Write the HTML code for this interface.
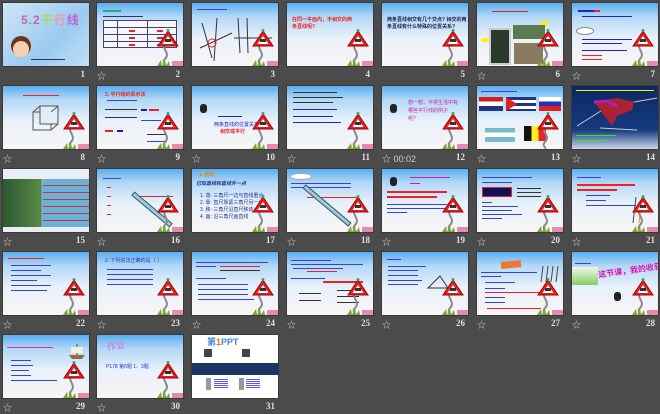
<!DOCTYPE html>
<html><head><meta charset="utf-8">
<style>
*{margin:0;padding:0;box-sizing:border-box}
body{width:660px;height:410px;background:#4b4b4b;position:relative;overflow:hidden;font-family:"Liberation Sans","Noto Sans CJK SC",sans-serif}
.s{position:absolute;width:86px;height:63px;overflow:hidden;background:linear-gradient(#5aaef0 0%,#b4d8f6 22%,#e8f1fa 55%,#f8f5f5 100%);box-shadow:0 0 0 1px #3a3a3a}
.s.w{background:#fff}
.n{position:absolute;color:#e0e0e0;font-size:9px;font-family:"Liberation Serif",serif;font-weight:bold;text-align:right;width:30px}
.st{position:absolute;color:#cfcfcf;font-size:9px}
.sg{position:absolute;left:60px;top:26px;width:22px;height:37px}
.gr{position:absolute;right:0;bottom:0;width:26px;height:8px}
.t{position:absolute;font-size:5px;line-height:6px;white-space:nowrap}
.b{position:absolute;height:2px;background:#3344dd}
</style></head><body>

<svg width="0" height="0" style="position:absolute">
<defs>
<g id="sign">
<path d="M8 14 C4 20 14 24 8 30 C4 34 10 36 8 37" stroke="#8a8a8a" stroke-width="2" fill="none"/>
<path d="M11 2 L21 17 L1 17 Z" fill="#d22" stroke="#a00" stroke-width="1"/>
<path d="M11 7 L16.5 15 L5.5 15 Z" fill="#fff"/>
<rect x="8" y="10" width="6" height="3" fill="#333"/>
<circle cx="11" cy="1.5" r="1.5" fill="#3a6"/>
</g>
<g id="grass">
<path d="M0 8 L4 2 L5 8 L8 1 L9 8 L12 3 L13 8 Z" fill="#7a3"/>
<rect x="15" y="3" width="11" height="5" fill="#e88ab0"/>
</g>
</defs>
</svg>

<!-- Row 1 -->
<div class="s" style="left:3px;top:3px;background:linear-gradient(135deg,#cfe6f8,#9ccaf0 60%,#bfe0f8)">
<div class="t" style="left:18px;top:10px;font-size:12px;line-height:14px;color:#c6a;font-weight:bold;letter-spacing:1px">5.2<span style="color:#a8d86a">平</span><span style="color:#e9a">行</span><span style="color:#b6c">线</span></div>
<div style="position:absolute;left:10px;top:38px;width:16px;height:16px;border-radius:50%;background:#f5d0b0;box-shadow:0 -3px 0 2px #6b3520"></div>
<div class="b" style="left:28px;top:56px;width:34px;height:1px;background:#335"></div>
</div>
<div class="s" style="left:97px;top:3px">
<div class="b" style="left:6px;top:7px;width:18px;background:#2a8"></div>
<div class="b" style="left:6px;top:13px;width:40px;background:#336;height:1px"></div>
<div style="position:absolute;left:6px;top:17px;width:74px;height:28px;border:1px solid #446;background:#f5f5ff"></div>
<div class="b" style="left:6px;top:24px;width:74px;height:1px;background:#446"></div>
<div class="b" style="left:6px;top:31px;width:74px;height:1px;background:#446"></div>
<div class="b" style="left:6px;top:38px;width:74px;height:1px;background:#446"></div>
<div class="b" style="left:20px;top:17px;width:1px;height:28px;background:#446"></div>
<div class="b" style="left:50px;top:17px;width:1px;height:28px;background:#446"></div>
<div class="b" style="left:32px;top:27px;width:6px;background:#e22"></div>
<div class="b" style="left:32px;top:34px;width:6px;background:#e22"></div>
<div class="b" style="left:32px;top:41px;width:6px;background:#e22"></div>
<div class="b" style="left:60px;top:27px;width:6px;background:#e22"></div>
<div class="b" style="left:60px;top:34px;width:6px;background:#e22"></div>
<div class="b" style="left:60px;top:41px;width:6px;background:#e22"></div>
<svg class="sg" viewBox="0 0 22 37"><use href="#sign"/></svg><svg class="gr" viewBox="0 0 26 8"><use href="#grass"/></svg>
</div>
<div class="s" style="left:192px;top:3px">
<div class="b" style="left:5px;top:6px;width:30px;height:1px"></div>
<svg style="position:absolute;left:0;top:0" width="86" height="63"><g stroke="#333" stroke-width="1"><line x1="8" y1="45" x2="40" y2="30"/><line x1="10" y1="20" x2="20" y2="55"/><line x1="25" y1="15" x2="22" y2="58"/><line x1="46" y1="15" x2="48" y2="50"/><line x1="55" y1="15" x2="56" y2="50"/><line x1="42" y1="35" x2="80" y2="35"/></g><circle cx="20" cy="40" r="4" fill="none" stroke="#e22"/></svg>
<svg class="sg" viewBox="0 0 22 37"><use href="#sign"/></svg><svg class="gr" viewBox="0 0 26 8"><use href="#grass"/></svg>
</div>
<div class="s" style="left:287px;top:3px">
<div class="t" style="left:5px;top:14px;color:#e22;font-weight:bold">在同一平面内，不相交的两</div>
<div class="t" style="left:5px;top:21px;color:#e22;font-weight:bold">条直线呢?</div>
<svg class="sg" viewBox="0 0 22 37"><use href="#sign"/></svg><svg class="gr" viewBox="0 0 26 8"><use href="#grass"/></svg>
</div>
<div class="s" style="left:382px;top:3px">
<div class="t" style="left:5px;top:14px;color:#225;font-weight:bold">两条直线相交有几个交点? 相交的两</div>
<div class="t" style="left:5px;top:21px;color:#225;font-weight:bold">条直线有什么特殊的位置关系?</div>
<svg class="sg" viewBox="0 0 22 37"><use href="#sign"/></svg><svg class="gr" viewBox="0 0 26 8"><use href="#grass"/></svg>
</div>
<div class="s" style="left:477px;top:3px">
<div class="b" style="left:15px;top:8px;width:36px;background:#e22;height:1px"></div>
<div style="position:absolute;left:12px;top:25px;width:22px;height:37px;background:#2a3a2a;border:2px solid #ccc"></div>
<div style="position:absolute;left:36px;top:22px;width:32px;height:14px;background:#5c7a50"></div>
<div style="position:absolute;left:37px;top:40px;width:29px;height:21px;background:#8a7a60"></div>
<div style="position:absolute;left:4px;top:35px;width:8px;height:4px;background:#fe2"></div>
<div style="position:absolute;left:64px;top:18px;width:8px;height:4px;background:#fe2"></div>
<svg class="sg" viewBox="0 0 22 37"><use href="#sign"/></svg><svg class="gr" viewBox="0 0 26 8"><use href="#grass"/></svg>
</div>
<div class="s" style="left:572px;top:3px">
<div class="b" style="left:6px;top:7px;width:20px;background:#22c"></div>
<div class="b" style="left:22px;top:7px;width:6px;background:#e22"></div>
<div class="b" style="left:10px;top:13px;width:50px;height:1px;background:#22c"></div>
<div style="position:absolute;left:4px;top:24px;width:18px;height:8px;border-radius:50%;background:#fff;border:1px solid #888"></div>
<div class="b" style="left:10px;top:36px;width:50px;height:1px;background:#22c"></div>
<div class="b" style="left:10px;top:40px;width:40px;height:1px;background:#22c"></div>
<div class="b" style="left:10px;top:47px;width:45px;height:1px;background:#22c"></div>
<div class="b" style="left:10px;top:52px;width:20px;height:1px;background:#e22"></div>
<div class="b" style="left:10px;top:56px;width:20px;height:1px;background:#e22"></div>
<svg class="sg" viewBox="0 0 22 37"><use href="#sign"/></svg><svg class="gr" viewBox="0 0 26 8"><use href="#grass"/></svg>
</div>

<!-- Row 2 -->
<div class="s" style="left:3px;top:86px">
<div class="b" style="left:20px;top:9px;width:36px;height:1px;background:#e22"></div>
<svg style="position:absolute;left:28px;top:18px" width="30" height="30"><g fill="none" stroke="#555"><rect x="2" y="8" width="18" height="18"/><rect x="9" y="2" width="18" height="18" fill="#e0eef8"/><line x1="2" y1="8" x2="9" y2="2"/><line x1="20" y1="8" x2="27" y2="2"/><line x1="20" y1="26" x2="27" y2="20"/></g></svg>
<svg class="sg" viewBox="0 0 22 37"><use href="#sign"/></svg><svg class="gr" viewBox="0 0 26 8"><use href="#grass"/></svg>
</div>
<div class="s" style="left:97px;top:86px">
<div class="t" style="left:8px;top:6px;color:#e22;font-weight:bold">2. 平行线的表示法</div>
<div class="b" style="left:10px;top:14px;width:30px;height:1px"></div>
<div class="b" style="left:8px;top:23px;width:32px;height:1px;background:#333"></div>
<div class="b" style="left:8px;top:31px;width:32px;height:1px;background:#333"></div>
<div class="b" style="left:44px;top:23px;width:6px;background:#228"></div>
<div class="b" style="left:52px;top:23px;width:10px;background:#e22"></div>
<div class="b" style="left:8px;top:44px;width:8px;background:#e22"></div>
<div class="b" style="left:20px;top:44px;width:6px;background:#228"></div>
<div class="b" style="left:44px;top:34px;width:20px;height:1px"></div>
<div class="b" style="left:50px;top:48px;width:20px;height:1px;background:#333"></div>
<div class="b" style="left:50px;top:55px;width:20px;height:1px"></div>
<svg class="sg" viewBox="0 0 22 37"><use href="#sign"/></svg><svg class="gr" viewBox="0 0 26 8"><use href="#grass"/></svg>
</div>
<div class="s" style="left:192px;top:86px">
<div style="position:absolute;left:8px;top:18px;width:7px;height:9px;background:#222;border-radius:3px"></div>
<div class="b" style="left:26px;top:30px;width:24px;height:1px;background:#22c"></div>
<div class="t" style="left:22px;top:36px;color:#22c">两条直线的位置关系有</div>
<div class="t" style="left:28px;top:43px;color:#e22;font-weight:bold">相交或平行</div>
<svg class="sg" viewBox="0 0 22 37"><use href="#sign"/></svg><svg class="gr" viewBox="0 0 26 8"><use href="#grass"/></svg>
</div>
<div class="s" style="left:287px;top:86px">
<div class="b" style="left:6px;top:6px;width:44px;height:1px;background:#333"></div>
<div class="b" style="left:6px;top:11px;width:50px;height:1px;background:#333"></div>
<div class="b" style="left:6px;top:16px;width:40px;height:1px;background:#333"></div>
<div class="b" style="left:6px;top:23px;width:44px;height:1px;background:#22c"></div>
<div class="b" style="left:6px;top:30px;width:40px;height:1px;background:#22c"></div>
<div class="b" style="left:6px;top:36px;width:48px;height:1px;background:#22c"></div>
<svg class="sg" viewBox="0 0 22 37"><use href="#sign"/></svg><svg class="gr" viewBox="0 0 26 8"><use href="#grass"/></svg>
</div>
<div class="s" style="left:382px;top:86px">
<div style="position:absolute;left:8px;top:18px;width:7px;height:9px;background:#222;border-radius:3px"></div>
<div class="t" style="left:26px;top:14px;color:#c2a">想一想，平常生活中有</div>
<div class="t" style="left:26px;top:22px;color:#c2a">哪些平行线的例子</div>
<div class="t" style="left:26px;top:30px;color:#c2a">呢?</div>
<svg class="sg" viewBox="0 0 22 37"><use href="#sign"/></svg><svg class="gr" viewBox="0 0 26 8"><use href="#grass"/></svg>
</div>
<div class="s" style="left:477px;top:86px">
<div class="b" style="left:4px;top:5px;width:36px;height:1px"></div>
<div style="position:absolute;left:2px;top:11px;width:24px;height:14px;background:linear-gradient(#c22 33%,#fff 33% 66%,#238 66%)"></div>
<div style="position:absolute;left:29px;top:11px;width:30px;height:14px;background:repeating-linear-gradient(#238 0 3px,#fff 3px 6px)"></div>
<div style="position:absolute;left:29px;top:11px;width:0;height:0;border-top:7px solid transparent;border-bottom:7px solid transparent;border-left:11px solid #d22"></div>
<div style="position:absolute;left:62px;top:11px;width:22px;height:14px;background:linear-gradient(#fff 33%,#23b 33% 66%,#d22 66%)"></div>
<div style="position:absolute;left:8px;top:42px;width:30px;height:14px;background:linear-gradient(#7bc 33%,#fff 33% 66%,#7bc 66%)"></div>
<div style="position:absolute;left:47px;top:40px;width:22px;height:15px;background:linear-gradient(90deg,#111 33%,#fe2 33% 66%,#e22 66%)"></div>
<svg class="sg" viewBox="0 0 22 37"><use href="#sign"/></svg>
</div>
<div class="s" style="left:572px;top:86px;background:linear-gradient(#0d2860,#153a80 70%,#cbd8e8)">
<div class="b" style="left:4px;top:4px;width:78px;height:1px;background:#ee2"></div>
<svg style="position:absolute;left:0;top:0" width="86" height="63"><line x1="5" y1="40" x2="40" y2="18" stroke="#ccc"/><line x1="40" y1="20" x2="85" y2="12" stroke="#ccc"/><path d="M22 16 L45 12 L62 16 L60 24 L45 30 L40 40 Z" fill="#a23" /><path d="M22 16 L35 15 L45 20" stroke="#a2b" stroke-width="3" fill="none"/><line x1="28" y1="42" x2="65" y2="44" stroke="#ccc"/></svg>
<div class="b" style="left:4px;top:49px;width:40px;height:1px;background:#2e2"></div>
<div class="b" style="left:4px;top:54px;width:30px;height:1px;background:#2e2"></div>
</div>

<!-- Row 3 -->
<div class="s" style="left:3px;top:169px;background:linear-gradient(90deg,#2a5a30 0,#5a8a48 45%,#7ab8d8 45%,#9ad0ea)">
<div style="position:absolute;left:0;top:0;width:86px;height:10px;background:#e8eef4"></div>
<div style="position:absolute;left:40px;top:10px;width:46px;height:48px;background:repeating-linear-gradient(#6ab0d8 0 6px,#c33 6px 7px)"></div>
<div style="position:absolute;left:0;top:58px;width:86px;height:5px;background:#e8eef4"></div>
</div>
<div class="s" style="left:97px;top:169px">
<div class="b" style="left:6px;top:9px;width:18px;height:1px"></div>
<div class="b" style="left:10px;top:18px;width:4px;height:1px;background:#e22"></div>
<div class="b" style="left:10px;top:27px;width:4px;height:1px;background:#e22"></div>
<div class="b" style="left:10px;top:36px;width:4px;height:1px;background:#e22"></div>
<div class="b" style="left:10px;top:45px;width:4px;height:1px;background:#e22"></div>
<div class="b" style="left:40px;top:27px;width:36px;height:1px;background:#e22"></div>
<div style="position:absolute;left:30px;top:38px;width:50px;height:5px;background:#9cd;border:1px solid #456;transform:rotate(40deg)"></div>
<svg class="sg" viewBox="0 0 22 37"><use href="#sign"/></svg><svg class="gr" viewBox="0 0 26 8"><use href="#grass"/></svg>
</div>
<div class="s" style="left:192px;top:169px">
<div class="t" style="left:6px;top:3px;color:#e80;font-weight:bold">▲ 画法</div>
<div class="t" style="left:4px;top:12px;color:#238;font-weight:bold;font-style:italic">已知直线和直线外一点</div>
<div class="t" style="left:8px;top:24px;color:#238">1. 落: 三角尺一边与直线重合</div>
<div class="t" style="left:8px;top:31px;color:#238">2. 靠: 直尺靠紧三角尺另一边</div>
<div class="t" style="left:8px;top:38px;color:#238">3. 移: 三角尺沿直尺移动</div>
<div class="t" style="left:8px;top:45px;color:#238">4. 画: 沿三角尺画直线</div>
<svg class="sg" viewBox="0 0 22 37"><use href="#sign"/></svg><svg class="gr" viewBox="0 0 26 8"><use href="#grass"/></svg>
</div>
<div class="s" style="left:287px;top:169px">
<div style="position:absolute;left:3px;top:4px;width:22px;height:7px;border-radius:50%;background:#fff;border:1px solid #aaa"></div>
<div class="b" style="left:4px;top:14px;width:60px;height:1px"></div>
<div class="b" style="left:4px;top:18px;width:60px;height:1px"></div>
<div class="b" style="left:20px;top:28px;width:50px;height:1px;background:#e22"></div>
<div style="position:absolute;left:10px;top:34px;width:60px;height:5px;background:#9cd;border:1px solid #456;transform:rotate(40deg)"></div>
<svg class="sg" viewBox="0 0 22 37"><use href="#sign"/></svg><svg class="gr" viewBox="0 0 26 8"><use href="#grass"/></svg>
</div>
<div class="s" style="left:382px;top:169px">
<div style="position:absolute;left:8px;top:8px;width:7px;height:9px;background:#222;border-radius:3px"></div>
<div class="b" style="left:28px;top:8px;width:40px;height:1px;background:#c2a"></div>
<div class="b" style="left:28px;top:14px;width:10px;height:1px;background:#c2a"></div>
<div class="b" style="left:5px;top:22px;width:60px;background:#e22"></div>
<div class="b" style="left:5px;top:27px;width:50px;background:#e22"></div>
<div class="b" style="left:5px;top:35px;width:60px;height:1px"></div>
<div class="b" style="left:5px;top:39px;width:60px;height:1px"></div>
<div class="b" style="left:5px;top:43px;width:20px;height:1px"></div>
<svg class="sg" viewBox="0 0 22 37"><use href="#sign"/></svg><svg class="gr" viewBox="0 0 26 8"><use href="#grass"/></svg>
</div>
<div class="s" style="left:477px;top:169px">
<div class="b" style="left:5px;top:8px;width:50px;height:1px"></div>
<div class="b" style="left:5px;top:13px;width:30px;height:1px"></div>
<div style="position:absolute;left:5px;top:18px;width:30px;height:10px;background:#115;border:1px solid #e22"></div>
<div class="b" style="left:40px;top:19px;width:24px;height:1px;background:#333"></div>
<div class="b" style="left:40px;top:23px;width:24px;height:1px;background:#333"></div>
<div class="b" style="left:40px;top:27px;width:24px;height:1px;background:#333"></div>
<div class="b" style="left:5px;top:33px;width:10px;height:1px"></div>
<div class="b" style="left:5px;top:37px;width:36px;height:1px"></div>
<div class="b" style="left:5px;top:41px;width:30px;height:1px"></div>
<div class="b" style="left:5px;top:45px;width:40px;height:1px"></div>
<div class="b" style="left:5px;top:49px;width:20px;height:1px"></div>
<svg class="sg" viewBox="0 0 22 37"><use href="#sign"/></svg><svg class="gr" viewBox="0 0 26 8"><use href="#grass"/></svg>
</div>
<div class="s" style="left:572px;top:169px">
<div class="b" style="left:5px;top:8px;width:24px;height:1px"></div>
<div class="b" style="left:5px;top:15px;width:58px;background:#e22"></div>
<div class="b" style="left:5px;top:20px;width:40px;background:#e22"></div>
<div class="b" style="left:14px;top:26px;width:24px;height:1px"></div>
<div class="b" style="left:14px;top:31px;width:20px;height:1px"></div>
<div class="b" style="left:14px;top:36px;width:50px;height:1px"></div>
<svg style="position:absolute;left:60px;top:26px" width="12" height="30"><line x1="4" y1="2" x2="1" y2="28" stroke="#444"/><line x1="10" y1="2" x2="7" y2="28" stroke="#e84"/></svg>
<svg class="sg" viewBox="0 0 22 37"><use href="#sign"/></svg><svg class="gr" viewBox="0 0 26 8"><use href="#grass"/></svg>
</div>

<!-- Row 4 -->
<div class="s" style="left:3px;top:252px">
<div class="b" style="left:5px;top:6px;width:36px;height:1px;background:#e22"></div>
<div class="b" style="left:8px;top:13px;width:40px;height:1px"></div>
<div class="b" style="left:8px;top:18px;width:30px;height:1px"></div>
<div class="b" style="left:8px;top:23px;width:40px;height:1px"></div>
<div class="b" style="left:8px;top:28px;width:26px;height:1px"></div>
<div class="b" style="left:8px;top:33px;width:40px;height:1px"></div>
<div class="b" style="left:8px;top:38px;width:36px;height:1px"></div>
<svg class="sg" viewBox="0 0 22 37"><use href="#sign"/></svg><svg class="gr" viewBox="0 0 26 8"><use href="#grass"/></svg>
</div>
<div class="s" style="left:97px;top:252px">
<div class="t" style="left:8px;top:6px;color:#33b">2. 下列说法正确的是（ ）</div>
<div class="b" style="left:10px;top:17px;width:46px;height:1px"></div>
<div class="b" style="left:10px;top:22px;width:46px;height:1px"></div>
<div class="b" style="left:10px;top:27px;width:46px;height:1px"></div>
<div class="b" style="left:10px;top:32px;width:46px;height:1px"></div>
<svg class="sg" viewBox="0 0 22 37"><use href="#sign"/></svg><svg class="gr" viewBox="0 0 26 8"><use href="#grass"/></svg>
</div>
<div class="s" style="left:192px;top:252px">
<div class="b" style="left:4px;top:10px;width:72px;height:1px"></div>
<div class="b" style="left:4px;top:14px;width:20px;height:1px"></div>
<div class="b" style="left:28px;top:14px;width:40px;height:1px;background:#e22"></div>
<div class="b" style="left:28px;top:18px;width:40px;height:1px;background:#333"></div>
<div class="b" style="left:4px;top:26px;width:30px;height:1px"></div>
<div class="b" style="left:6px;top:32px;width:50px;height:1px"></div>
<div class="b" style="left:6px;top:37px;width:50px;height:1px"></div>
<div class="b" style="left:6px;top:42px;width:50px;height:1px"></div>
<div class="b" style="left:6px;top:47px;width:56px;height:1px"></div>
<svg class="sg" viewBox="0 0 22 37"><use href="#sign"/></svg><svg class="gr" viewBox="0 0 26 8"><use href="#grass"/></svg>
</div>
<div class="s" style="left:287px;top:252px">
<div class="b" style="left:4px;top:8px;width:40px;height:1px"></div>
<div class="b" style="left:4px;top:12px;width:72px;height:1px"></div>
<div class="b" style="left:6px;top:16px;width:50px;height:1px"></div>
<div class="b" style="left:20px;top:19px;width:30px;height:1px;background:#e22"></div>
<div class="b" style="left:4px;top:26px;width:34px;height:1px"></div>
<div class="b" style="left:36px;top:29px;width:40px;background:#e22"></div>
<div class="b" style="left:12px;top:41px;width:22px;height:1px;background:#333"></div>
<div class="b" style="left:12px;top:48px;width:22px;height:1px;background:#333"></div>
<div class="b" style="left:50px;top:38px;width:22px;height:1px;background:#333"></div>
<div class="b" style="left:50px;top:44px;width:22px;height:1px;background:#333"></div>
<div class="b" style="left:50px;top:50px;width:22px;height:1px;background:#333"></div>
<svg class="sg" viewBox="0 0 22 37"><use href="#sign"/></svg><svg class="gr" viewBox="0 0 26 8"><use href="#grass"/></svg>
</div>
<div class="s" style="left:382px;top:252px">
<div class="b" style="left:5px;top:7px;width:14px;height:1px"></div>
<div class="b" style="left:6px;top:14px;width:38px;height:1px"></div>
<div class="b" style="left:6px;top:18px;width:30px;height:1px"></div>
<div class="b" style="left:6px;top:23px;width:30px;height:1px"></div>
<div class="b" style="left:6px;top:28px;width:34px;height:1px"></div>
<div class="b" style="left:6px;top:32px;width:30px;height:1px"></div>
<svg style="position:absolute;left:44px;top:22px" width="24" height="16"><path d="M14 2 L22 14 L2 14 Z" fill="none" stroke="#333"/></svg>
<svg class="sg" viewBox="0 0 22 37"><use href="#sign"/></svg><svg class="gr" viewBox="0 0 26 8"><use href="#grass"/></svg>
</div>
<div class="s" style="left:477px;top:252px">
<div style="position:absolute;left:24px;top:9px;width:20px;height:7px;background:#e73;transform:rotate(-5deg)"></div>
<div class="b" style="left:4px;top:20px;width:56px;height:1px"></div>
<div class="b" style="left:4px;top:24px;width:20px;height:1px"></div>
<div class="b" style="left:8px;top:30px;width:30px;height:1px"></div>
<div class="b" style="left:8px;top:36px;width:20px;height:1px"></div>
<div class="b" style="left:8px;top:40px;width:56px;height:1px;background:#e22"></div>
<div class="b" style="left:8px;top:45px;width:20px;height:1px"></div>
<div class="b" style="left:8px;top:50px;width:20px;height:1px"></div>
<div class="b" style="left:10px;top:56px;width:54px;height:1px;background:#e22"></div>
<svg style="position:absolute;left:62px;top:12px" width="20" height="20"><g stroke="#444"><line x1="4" y1="2" x2="2" y2="18"/><line x1="9" y1="2" x2="7" y2="18"/><line x1="14" y1="2" x2="12" y2="18"/><line x1="19" y1="2" x2="17" y2="18"/></g></svg>
<svg class="sg" viewBox="0 0 22 37"><use href="#sign"/></svg><svg class="gr" viewBox="0 0 26 8"><use href="#grass"/></svg>
</div>
<div class="s" style="left:572px;top:252px">
<div class="b" style="left:3px;top:11px;width:16px;height:1px"></div>
<div style="position:absolute;left:0;top:15px;width:26px;height:18px;background:linear-gradient(#f0f8e8,#8c6)"></div>
<div class="t" style="left:26px;top:13px;color:#d1a;font-weight:bold;font-size:8px;line-height:9px;transform:rotate(-8deg)">这节课，我的收获是…</div>
<div style="position:absolute;left:42px;top:40px;width:7px;height:9px;background:#222;border-radius:3px"></div>
<svg class="sg" viewBox="0 0 22 37"><use href="#sign"/></svg><svg class="gr" viewBox="0 0 26 8"><use href="#grass"/></svg>
</div>

<!-- Row 5 -->
<div class="s" style="left:3px;top:335px">
<div class="b" style="left:4px;top:12px;width:46px;height:1px;background:#e2a"></div>
<svg style="position:absolute;left:64px;top:8px" width="20" height="18"><path d="M2 12 L18 12 L15 16 L5 16 Z" fill="#964"/><line x1="10" y1="1" x2="10" y2="12" stroke="#654"/><path d="M4 4 L16 4 L16 10 L4 10 Z" fill="#f4eedd"/></svg>
<div class="b" style="left:8px;top:25px;width:20px;height:1px"></div>
<div class="b" style="left:8px;top:30px;width:22px;height:1px"></div>
<div class="b" style="left:8px;top:35px;width:18px;height:1px"></div>
<div class="b" style="left:8px;top:40px;width:20px;height:1px"></div>
<div class="b" style="left:8px;top:45px;width:46px;height:1px"></div>
<svg class="sg" viewBox="0 0 22 37"><use href="#sign"/></svg><svg class="gr" viewBox="0 0 26 8"><use href="#grass"/></svg>
</div>
<div class="s" style="left:97px;top:335px">
<div class="t" style="left:10px;top:6px;color:#c8d;font-size:9px;line-height:10px;font-weight:bold;transform:rotate(-10deg)">作业</div>
<div class="t" style="left:9px;top:29px;color:#33c">P178 第6题 1、3题</div>
<svg class="sg" viewBox="0 0 22 37"><use href="#sign"/></svg><svg class="gr" viewBox="0 0 26 8"><use href="#grass"/></svg>
</div>
<div class="s w" style="left:192px;top:335px">
<div class="t" style="left:15px;top:2px;font-size:9px;line-height:10px;font-weight:bold;color:#3a8ad8">第<span style="color:#f60">1</span>PPT</div>
<div style="position:absolute;left:12px;top:14px;width:8px;height:8px;background:#444"></div>
<div style="position:absolute;left:50px;top:14px;width:8px;height:8px;background:#444"></div>
<div style="position:absolute;left:0;top:28px;width:86px;height:12px;background:#1a3566"></div>
<div style="position:absolute;left:14px;top:43px;width:5px;height:12px;background:#999"></div>
<div style="position:absolute;left:22px;top:44px;width:14px;height:10px;background:repeating-linear-gradient(#55f 0 1px,#fff 1px 2px)"></div>
<div style="position:absolute;left:47px;top:43px;width:5px;height:12px;background:#999"></div>
<div style="position:absolute;left:54px;top:44px;width:14px;height:10px;background:repeating-linear-gradient(#55f 0 1px,#fff 1px 2px)"></div>
</div>

<!-- Labels -->
<div class="n" style="left:55px;top:69px">1</div>
<div class="st" style="left:97px;top:69px">☆</div><div class="n" style="left:150px;top:69px">2</div>
<div class="n" style="left:245px;top:69px">3</div>
<div class="n" style="left:340px;top:69px">4</div>
<div class="n" style="left:435px;top:69px">5</div>
<div class="st" style="left:477px;top:69px">☆</div><div class="n" style="left:530px;top:69px">6</div>
<div class="st" style="left:572px;top:69px">☆</div><div class="n" style="left:625px;top:69px">7</div>

<div class="st" style="left:3px;top:152px">☆</div><div class="n" style="left:55px;top:152px">8</div>
<div class="st" style="left:97px;top:152px">☆</div><div class="n" style="left:150px;top:152px">9</div>
<div class="st" style="left:192px;top:152px">☆</div><div class="n" style="left:245px;top:152px">10</div>
<div class="st" style="left:287px;top:152px">☆</div><div class="n" style="left:340px;top:152px">11</div>
<div class="st" style="left:382px;top:152px">☆ 00:02</div><div class="n" style="left:435px;top:152px">12</div>
<div class="st" style="left:477px;top:152px">☆</div><div class="n" style="left:530px;top:152px">13</div>
<div class="st" style="left:572px;top:152px">☆</div><div class="n" style="left:625px;top:152px">14</div>

<div class="st" style="left:3px;top:235px">☆</div><div class="n" style="left:55px;top:235px">15</div>
<div class="st" style="left:97px;top:235px">☆</div><div class="n" style="left:150px;top:235px">16</div>
<div class="n" style="left:245px;top:235px">17</div>
<div class="st" style="left:287px;top:235px">☆</div><div class="n" style="left:340px;top:235px">18</div>
<div class="st" style="left:382px;top:235px">☆</div><div class="n" style="left:435px;top:235px">19</div>
<div class="st" style="left:477px;top:235px">☆</div><div class="n" style="left:530px;top:235px">20</div>
<div class="st" style="left:572px;top:235px">☆</div><div class="n" style="left:625px;top:235px">21</div>

<div class="st" style="left:3px;top:318px">☆</div><div class="n" style="left:55px;top:318px">22</div>
<div class="st" style="left:97px;top:318px">☆</div><div class="n" style="left:150px;top:318px">23</div>
<div class="st" style="left:192px;top:318px">☆</div><div class="n" style="left:245px;top:318px">24</div>
<div class="st" style="left:287px;top:318px">☆</div><div class="n" style="left:340px;top:318px">25</div>
<div class="st" style="left:382px;top:318px">☆</div><div class="n" style="left:435px;top:318px">26</div>
<div class="st" style="left:477px;top:318px">☆</div><div class="n" style="left:530px;top:318px">27</div>
<div class="st" style="left:572px;top:318px">☆</div><div class="n" style="left:625px;top:318px">28</div>

<div class="st" style="left:3px;top:401px">☆</div><div class="n" style="left:55px;top:401px">29</div>
<div class="st" style="left:97px;top:401px">☆</div><div class="n" style="left:150px;top:401px">30</div>
<div class="n" style="left:245px;top:401px">31</div>
</body></html>
